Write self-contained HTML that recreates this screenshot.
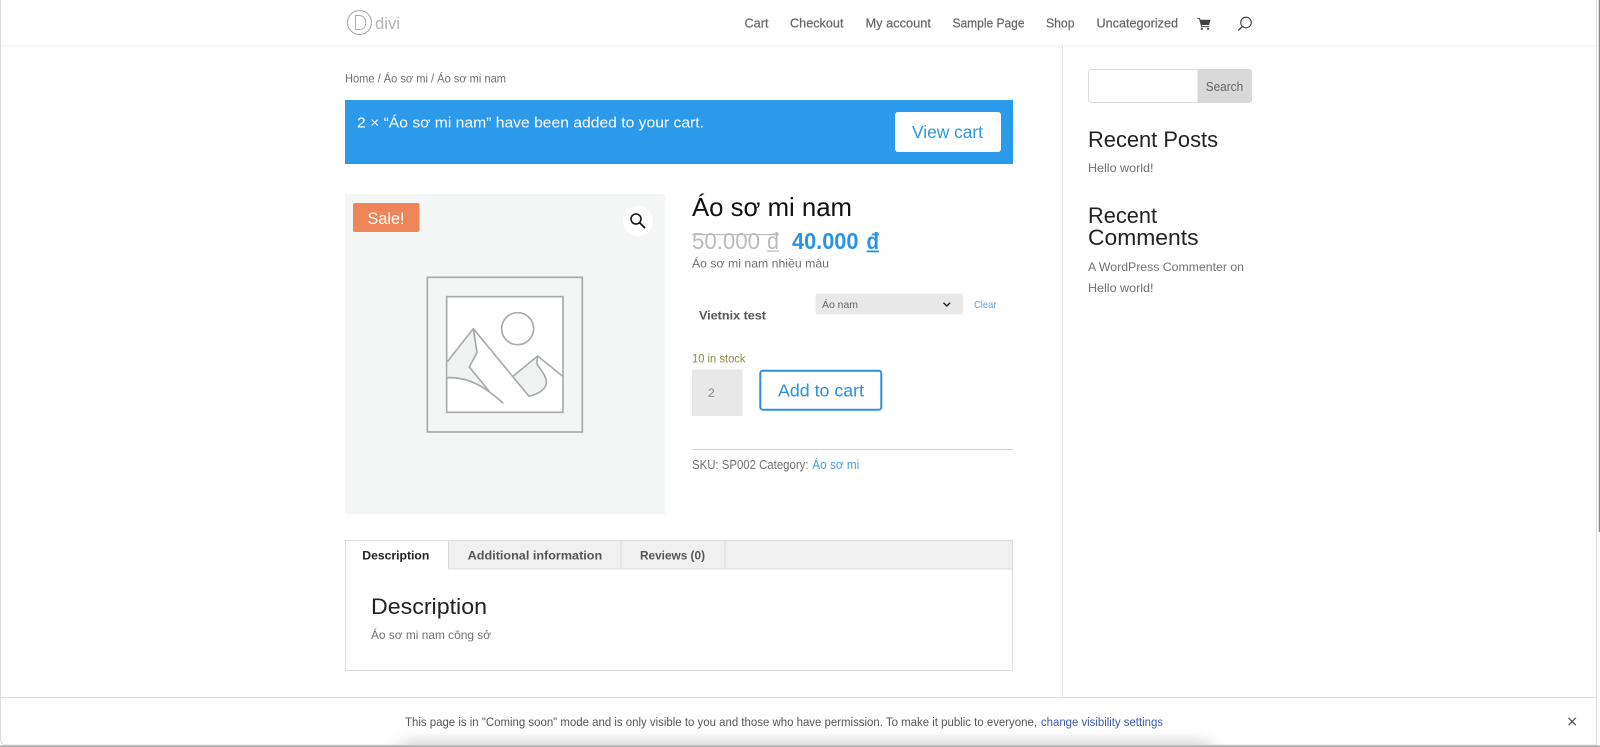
<!DOCTYPE html>
<html lang="vi">
<head>
<meta charset="utf-8">
<title>Áo sơ mi nam</title>
<style>
html,body{margin:0;padding:0;width:1600px;height:747px;overflow:hidden;background:#fff}
svg{display:block;filter:blur(.3px)}
text{font-family:"Liberation Sans",sans-serif;white-space:pre}
</style>
</head>
<body>
<svg xmlns="http://www.w3.org/2000/svg" width="1600" height="747" viewBox="0 0 1600 747">
<defs>
<linearGradient id="hs" x1="0" y1="0" x2="0" y2="1"><stop offset="0" stop-color="#000" stop-opacity=".035"/><stop offset="1" stop-color="#000" stop-opacity="0"/></linearGradient>
<filter id="bs" x="-20%" y="-300%" width="140%" height="700%"><feGaussianBlur stdDeviation="9"/></filter>
</defs>
<rect width="1600" height="747" fill="#fff"/>

<!-- sidebar divider -->
<rect x="1062" y="45" width="1" height="653" fill="#e2e2e2"/>

<!-- header -->
<rect x="0" y="45" width="1596" height="4" fill="url(#hs)"/>
<circle cx="359.5" cy="22.5" r="12" fill="none" stroke="#a6a6a6" stroke-width="1"/>
<path d="M355.5 15.500h3.500c4.500 0 6.800 3 6.800 7s-2.300 7-6.800 7h-3.500z" fill="none" stroke="#a6a6a6" stroke-width=".9"/>
<text x="375" y="29" font-size="17" fill="#b4b4b4" textLength="25" lengthAdjust="spacingAndGlyphs">divi</text>
<g font-size="13" fill="#666" stroke="#666" stroke-width=".2">
<text x="744.500" y="27.500" textLength="24" lengthAdjust="spacingAndGlyphs">Cart</text>
<text x="790" y="27.500" textLength="53.500" lengthAdjust="spacingAndGlyphs">Checkout</text>
<text x="865.500" y="27.500" textLength="65.500" lengthAdjust="spacingAndGlyphs">My account</text>
<text x="952.500" y="27.500" textLength="72" lengthAdjust="spacingAndGlyphs">Sample Page</text>
<text x="1046" y="27.500" textLength="28.500" lengthAdjust="spacingAndGlyphs">Shop</text>
<text x="1096.500" y="27.500" textLength="81.500" lengthAdjust="spacingAndGlyphs">Uncategorized</text>
</g>
<path d="M1197.500 18h2.400l.5 1.700h10.100l-1.400 5.300h-7.300l.3 1.100h7.200v1h-8l-2.200-8.100h-1.600z" fill="#444"/>
<circle cx="1201.800" cy="28.800" r="1.100" fill="#444"/><circle cx="1208" cy="28.800" r="1.100" fill="#444"/>
<circle cx="1246" cy="22.500" r="5.300" fill="none" stroke="#444" stroke-width="1.100"/>
<path d="M1242.300 26.500l-4 4" stroke="#444" stroke-width="1.300" fill="none"/>

<!-- breadcrumb -->
<text x="345" y="82.500" font-size="11.500" fill="#707070" textLength="161" lengthAdjust="spacingAndGlyphs">Home / Áo sơ mi / Áo sơ mi nam</text>

<!-- notice -->
<rect x="345" y="100" width="668" height="64" fill="#2c9aeb"/>
<text x="357" y="127.500" font-size="15" fill="#fff" textLength="347" lengthAdjust="spacingAndGlyphs">2 × “Áo sơ mi nam” have been added to your cart.</text>
<rect x="895" y="112" width="106" height="40" rx="3" fill="#fff"/>
<text x="912" y="138" font-size="17.500" fill="#2c97de" textLength="71" lengthAdjust="spacingAndGlyphs">View cart</text>

<!-- product image -->
<rect x="345" y="194" width="320" height="320" fill="#f4f6f6"/>
<g transform="translate(340 190) scale(.33333)">
<rect x="262" y="262" width="465" height="464" fill="none" stroke="#a8abab" stroke-width="5"/>
<rect x="320" y="320" width="349" height="347" fill="#fff" stroke="#a8abab" stroke-width="5"/>
<path d="M322 515L400 416L411 487L388 531L447 603C410 580 370 563 322 563z" fill="#f1f3f3"/>
<path d="M520 558L593 498L590 520C600 540 625 560 618 585C610 605 590 612 567 619z" fill="#f1f3f3"/>
<circle cx="533" cy="416" r="48" fill="none" stroke="#a8abab" stroke-width="5"/>
<g fill="none" stroke="#a8abab" stroke-width="5" stroke-linejoin="round">
<path d="M322 515L400 416L567 619"/>
<path d="M520 558L593 498L667 558"/>
<path d="M400 416L411 487L388 531L447 603"/>
<path d="M322 563C390 560 440 595 490 640"/>
<path d="M593 498L590 520C600 540 625 560 618 585C610 605 590 612 567 619"/>
</g>
</g>
<rect x="353" y="203" width="66.500" height="29" rx="2" fill="#ee8559"/>
<text x="367.500" y="224" font-size="17" fill="#fff" textLength="37" lengthAdjust="spacingAndGlyphs">Sale!</text>
<circle cx="638" cy="221" r="15" fill="#fff"/>
<circle cx="636" cy="219" r="5" fill="none" stroke="#111" stroke-width="1.500"/>
<path d="M639.500 222.500l5.500 5.500" stroke="#111" stroke-width="1.800" fill="none"/>

<!-- summary -->
<text x="692" y="216" font-size="26" fill="#111" textLength="160" lengthAdjust="spacingAndGlyphs">Áo sơ mi nam</text>
<text x="692" y="249" font-size="23" fill="#bbb" textLength="68" lengthAdjust="spacingAndGlyphs">50.000</text>
<text x="767" y="249" font-size="23" fill="#bbb" textLength="12" lengthAdjust="spacingAndGlyphs">đ</text>
<rect x="692" y="234" width="87" height="1.200" fill="#bbb"/>
<rect x="767" y="250.500" width="12" height="1.200" fill="#bbb"/>
<text x="792" y="249" font-size="23" font-weight="700" fill="#2a94e4" textLength="66.500" lengthAdjust="spacingAndGlyphs">40.000</text>
<text x="866.500" y="249" font-size="23" font-weight="700" fill="#2a94e4" textLength="12.500" lengthAdjust="spacingAndGlyphs">đ</text>
<rect x="866.500" y="250.500" width="12.500" height="1.800" fill="#2a94e4"/>
<text x="692" y="267.500" font-size="12" fill="#707070" textLength="137" lengthAdjust="spacingAndGlyphs">Áo sơ mi nam nhiều màu</text>
<text x="699" y="319.500" font-size="12" font-weight="700" fill="#555" textLength="67" lengthAdjust="spacingAndGlyphs">Vietnix test</text>
<rect x="815.500" y="293.500" width="147.500" height="21" rx="2" fill="#e8e8e8"/>
<text x="822" y="308" font-size="10" fill="#666" textLength="36" lengthAdjust="spacingAndGlyphs">Áo nam</text>
<path d="M943.500 302.800l3.300 3.200 3.300-3.200" fill="none" stroke="#222" stroke-width="1.400"/>
<text x="974" y="308" font-size="10" fill="#5aa6de" textLength="22.500" lengthAdjust="spacingAndGlyphs">Clear</text>
<text x="692" y="362.500" font-size="11.500" fill="#8b8b45" textLength="53.500" lengthAdjust="spacingAndGlyphs">10 in stock</text>
<rect x="692" y="369.500" width="50.500" height="46.500" fill="#e8e8e8"/>
<text x="708" y="397" font-size="12" fill="#888">2</text>
<rect x="760.300" y="370.700" width="121" height="39" rx="2.500" fill="#fff" stroke="#2b8fdc" stroke-width="2"/>
<text x="778" y="396.500" font-size="17.500" fill="#2b8fdc" textLength="86" lengthAdjust="spacingAndGlyphs">Add to cart</text>
<rect x="692" y="449" width="321" height="1" fill="#d0d0d0"/>
<text x="692" y="469" font-size="12.500" fill="#707070" textLength="116.500" lengthAdjust="spacingAndGlyphs">SKU: SP002 Category:</text>
<text x="812.300" y="469" font-size="12.500" fill="#4a9fdc" textLength="47" lengthAdjust="spacingAndGlyphs">Áo sơ mi</text>

<!-- tabs -->
<rect x="345.500" y="540.500" width="667" height="130" fill="#fff" stroke="#ddd"/>
<rect x="449" y="541" width="563" height="28" fill="#f0f0f0"/>
<rect x="449" y="568.500" width="563" height="1" fill="#ddd"/>
<rect x="448" y="541" width="1" height="28.500" fill="#d8d8d8"/>
<rect x="620.500" y="541" width="1" height="28" fill="#d8d8d8"/>
<rect x="724.500" y="541" width="1" height="28" fill="#d8d8d8"/>
<g font-size="12" font-weight="700">
<text x="362.300" y="559.300" fill="#222" textLength="67" lengthAdjust="spacingAndGlyphs">Description</text>
<text x="467.700" y="559.300" fill="#555" textLength="134.500" lengthAdjust="spacingAndGlyphs">Additional information</text>
<text x="640" y="559.300" fill="#555" textLength="65" lengthAdjust="spacingAndGlyphs">Reviews (0)</text>
</g>
<text x="371" y="614" font-size="22" fill="#222" textLength="116" lengthAdjust="spacingAndGlyphs">Description</text>
<text x="371" y="639" font-size="12" fill="#707070" textLength="120" lengthAdjust="spacingAndGlyphs">Áo sơ mi nam công sở</text>

<!-- sidebar -->
<rect x="1088.500" y="69.500" width="163" height="33" rx="3" fill="#fff" stroke="#ddd"/>
<path d="M1197.500 69h51.500a3 3 0 0 1 3 3v27.500a3 3 0 0 1-3 3h-51.500z" fill="#d8d8d8"/>
<text x="1205.700" y="91" font-size="12.500" fill="#666" textLength="37.500" lengthAdjust="spacingAndGlyphs">Search</text>
<text x="1088" y="147" font-size="22" fill="#222" textLength="130" lengthAdjust="spacingAndGlyphs">Recent Posts</text>
<text x="1088" y="172" font-size="12" fill="#707070" textLength="65.500" lengthAdjust="spacingAndGlyphs">Hello world!</text>
<text x="1088" y="223" font-size="22" fill="#222" textLength="69" lengthAdjust="spacingAndGlyphs">Recent</text>
<text x="1088" y="245" font-size="22" fill="#222" textLength="110.500" lengthAdjust="spacingAndGlyphs">Comments</text>
<text x="1088" y="271" font-size="12" fill="#707070" textLength="156" lengthAdjust="spacingAndGlyphs">A WordPress Commenter on</text>
<text x="1088" y="292" font-size="12" fill="#707070" textLength="65.500" lengthAdjust="spacingAndGlyphs">Hello world!</text>

<!-- coming soon bar -->
<rect x="0" y="698" width="1600" height="49" fill="#fff"/>
<rect x="0" y="697" width="1597" height="1" fill="#ddd"/>
<rect x="400" y="746" width="810" height="14" fill="#000" opacity=".3" filter="url(#bs)"/>
<text x="405" y="726" font-size="11.500" fill="#555" textLength="632" lengthAdjust="spacingAndGlyphs">This page is in "Coming soon" mode and is only visible to you and those who have permission. To make it public to everyone,</text>
<text x="1041" y="726" font-size="11.500" fill="#3858a8" textLength="122" lengthAdjust="spacingAndGlyphs">change visibility settings</text>
<path d="M1568.500 717.800l7.400 7.400M1575.900 717.800l-7.400 7.400" stroke="#555" stroke-width="1.300" fill="none"/>

<!-- window frame -->
<path d="M.5 0V739.500a5.500 5.500 0 0 0 5.500 5.500H1596.500V0" fill="none" stroke="#ddd" stroke-width="1"/>
<path d="M0 745.500H1600V747H0z" fill="#aaa"/>
<rect x="1598.700" y="0" width="1.300" height="532" fill="#8a8a8a"/>
</svg>
</body>
</html>
